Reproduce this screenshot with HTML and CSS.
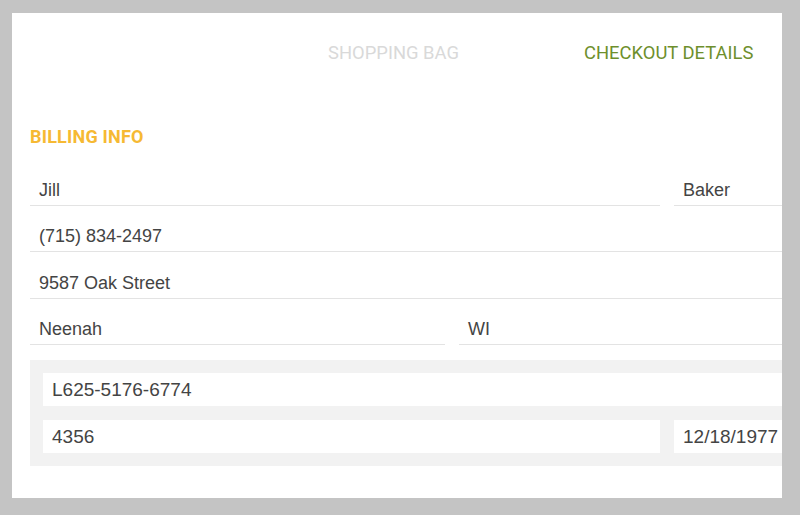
FILE: index.html
```html
<!DOCTYPE html>
<html lang="en">
<head>
<meta charset="utf-8">
<title>Checkout details</title>
<link rel="stylesheet" href="styles.css">
</head>
<body>
<main class="card">
  <nav class="steps">
    <span class="step">SHOPPING BAG</span>
    <span class="step step-active">CHECKOUT DETAILS</span>
  </nav>
  <section class="billing">
    <h2 class="section-title">BILLING INFO</h2>
    <div class="row row-name">
      <div class="field">Jill</div>
      <div class="field">Baker</div>
    </div>
    <div class="row">
      <div class="field">(715) 834-2497</div>
    </div>
    <div class="row">
      <div class="field">9587 Oak Street</div>
    </div>
    <div class="row row-city">
      <div class="field">Neenah</div>
      <div class="field">WI</div>
    </div>
    <div class="panel">
      <div class="box-field">L625-5176-6774</div>
      <div class="panel-row">
        <div class="box-field">4356</div>
        <div class="box-field">12/18/1977</div>
      </div>
    </div>
  </section>
</main>
</body>
</html>
```
FILE: styles.css
```css
html, body {
  margin: 0;
  padding: 0;
}
body {
  background: #c4c4c4;
  padding: 13px 18px 17px 12px;
  height: 515px;
  box-sizing: border-box;
  overflow: hidden;
}
.card {
  background: #ffffff;
  width: 770px;
  height: 485px;
  overflow: hidden;
  box-sizing: border-box;
  padding: 28px 0 0 18px;
}
.steps {
  display: flex;
  padding-left: 298px;
  gap: 125px;
  font-family: Roboto, "Liberation Sans", sans-serif;
  font-size: 18.4px;
  line-height: 24px;
  white-space: nowrap;
}
.step {
  color: #d9d9d9;
}
.step-active {
  color: #6e8f2c;
}
.billing {
  width: 920px;
  margin-top: 60px;
  font-family: "Liberation Sans", Arial, sans-serif;
  color: #444444;
}
.section-title {
  margin: 0 0 23px 0;
  font-family: Roboto, "Liberation Sans", sans-serif;
  font-weight: 700;
  font-size: 18px;
  line-height: 24px;
  color: #f6b933;
  letter-spacing: 0.2px;
}
.row {
  display: grid;
  grid-template-columns: 1fr;
  column-gap: 14px;
  margin-bottom: 12.4px;
}
.row-name {
  grid-template-columns: 630px 1fr;
}
.row-city {
  grid-template-columns: 415px 1fr;
  margin-bottom: 15px;
}
.field {
  height: 31px;
  padding-top: 2px;
  line-height: 33px;
  font-size: 18px;
  padding-left: 9px;
  border-bottom: 1px solid #e3e3e3;
  white-space: nowrap;
}
.panel {
  background: #f2f2f2;
  padding: 13px;
  display: flex;
  flex-direction: column;
  gap: 14px;
}
.panel-row {
  display: grid;
  grid-template-columns: 617px 1fr;
  column-gap: 14px;
}
.box-field {
  background: #ffffff;
  height: 33px;
  line-height: 33px;
  font-size: 19px;
  padding-left: 9px;
  white-space: nowrap;
}
```
